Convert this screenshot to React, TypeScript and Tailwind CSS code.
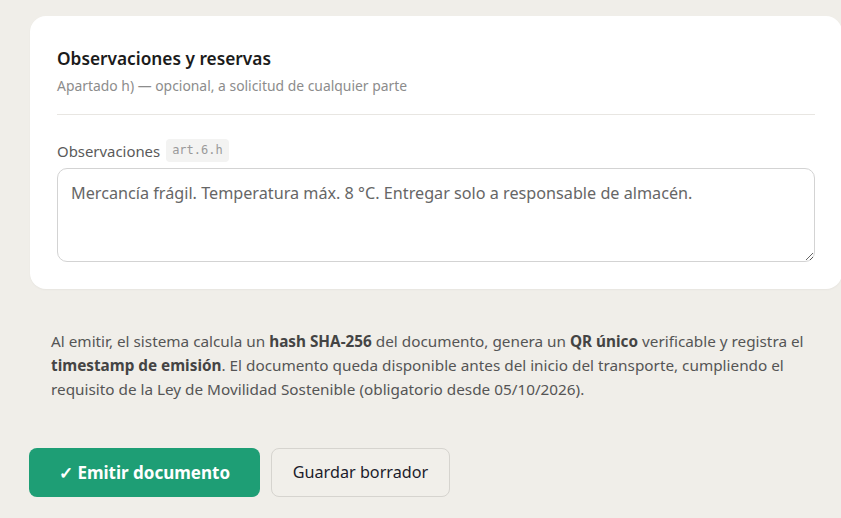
import React from "react";

const sans = { fontFamily: '"Noto Sans", "Open Sans", Arial, sans-serif' };

function ObservationsCard() {
  return (
    <section className="ml-[30px] mt-[16px] w-[812px] shrink-0 rounded-[16px] bg-white px-[27px] pt-[30px] pb-[27px] shadow-[0_1px_2px_rgba(0,0,0,0.04)]">
      <h2 className="text-[17.3px] font-semibold leading-[25px] text-[#1b1b1b]">
        Observaciones y reservas
      </h2>
      <p className="mt-[5px] text-[13.9px] leading-[20px] text-[#8c8c8c]">
        Apartado h) — opcional, a solicitud de cualquier parte
      </p>
      <div className="mt-[18px] h-px w-full bg-[#e8e6e2]" />
      <div className="mt-[24px] flex items-center gap-[6px]">
        <span className="text-[14.9px] leading-[22px] text-[#5a5a5a]">Observaciones</span>
        <span
          className="rounded-[4px] bg-[#f3f3f2] px-[6px] py-[3px] text-[12px] leading-[17px] text-[#9a9a9a]"
          style={{ fontFamily: '"DejaVu Sans Mono", "Liberation Mono", monospace' }}
        >
          art.6.h
        </span>
      </div>
      <textarea
        className="mt-[6px] block h-[94px] w-full resize-y rounded-[10px] border border-[#d3d3d3] bg-white px-[13px] py-[12px] text-[16.2px] leading-[24px] text-[#666] outline-none"
        style={sans}
        defaultValue="Mercancía frágil. Temperatura máx. 8 °C. Entregar solo a responsable de almacén."
      />
    </section>
  );
}

export default function App() {
  return (
    <div className="min-h-screen w-full overflow-hidden bg-[#f0eee9]" style={sans}>
      <div className="flex w-[900px] flex-col">
        <ObservationsCard />
        <p className="ml-[51px] mt-[40px] w-[770px] text-[15.3px] leading-[24px] text-[#555]">
          Al emitir, el sistema calcula un <b className="font-bold text-[#444]">hash SHA-256</b> del
          documento, genera un <b className="font-bold text-[#444]">QR único</b> verificable y registra
          el <b className="font-bold text-[#444]">timestamp de emisión</b>. El documento queda
          disponible antes del inicio del transporte, cumpliendo el requisito de la Ley de Movilidad
          Sostenible (obligatorio desde 05/10/2026).
        </p>
        <div className="ml-[29px] mt-[47px] flex gap-[11px]">
          <button className="h-[49px] w-[231px] rounded-[8px] bg-[#1e9e75] text-[17px] font-bold text-white">
            ✓ Emitir documento
          </button>
          <button className="h-[49px] w-[179px] rounded-[8px] border border-[#d6d4cf] bg-[#f1efea] text-[16.2px] text-[#1c1c2a]">
            Guardar borrador
          </button>
        </div>
      </div>
    </div>
  );
}
